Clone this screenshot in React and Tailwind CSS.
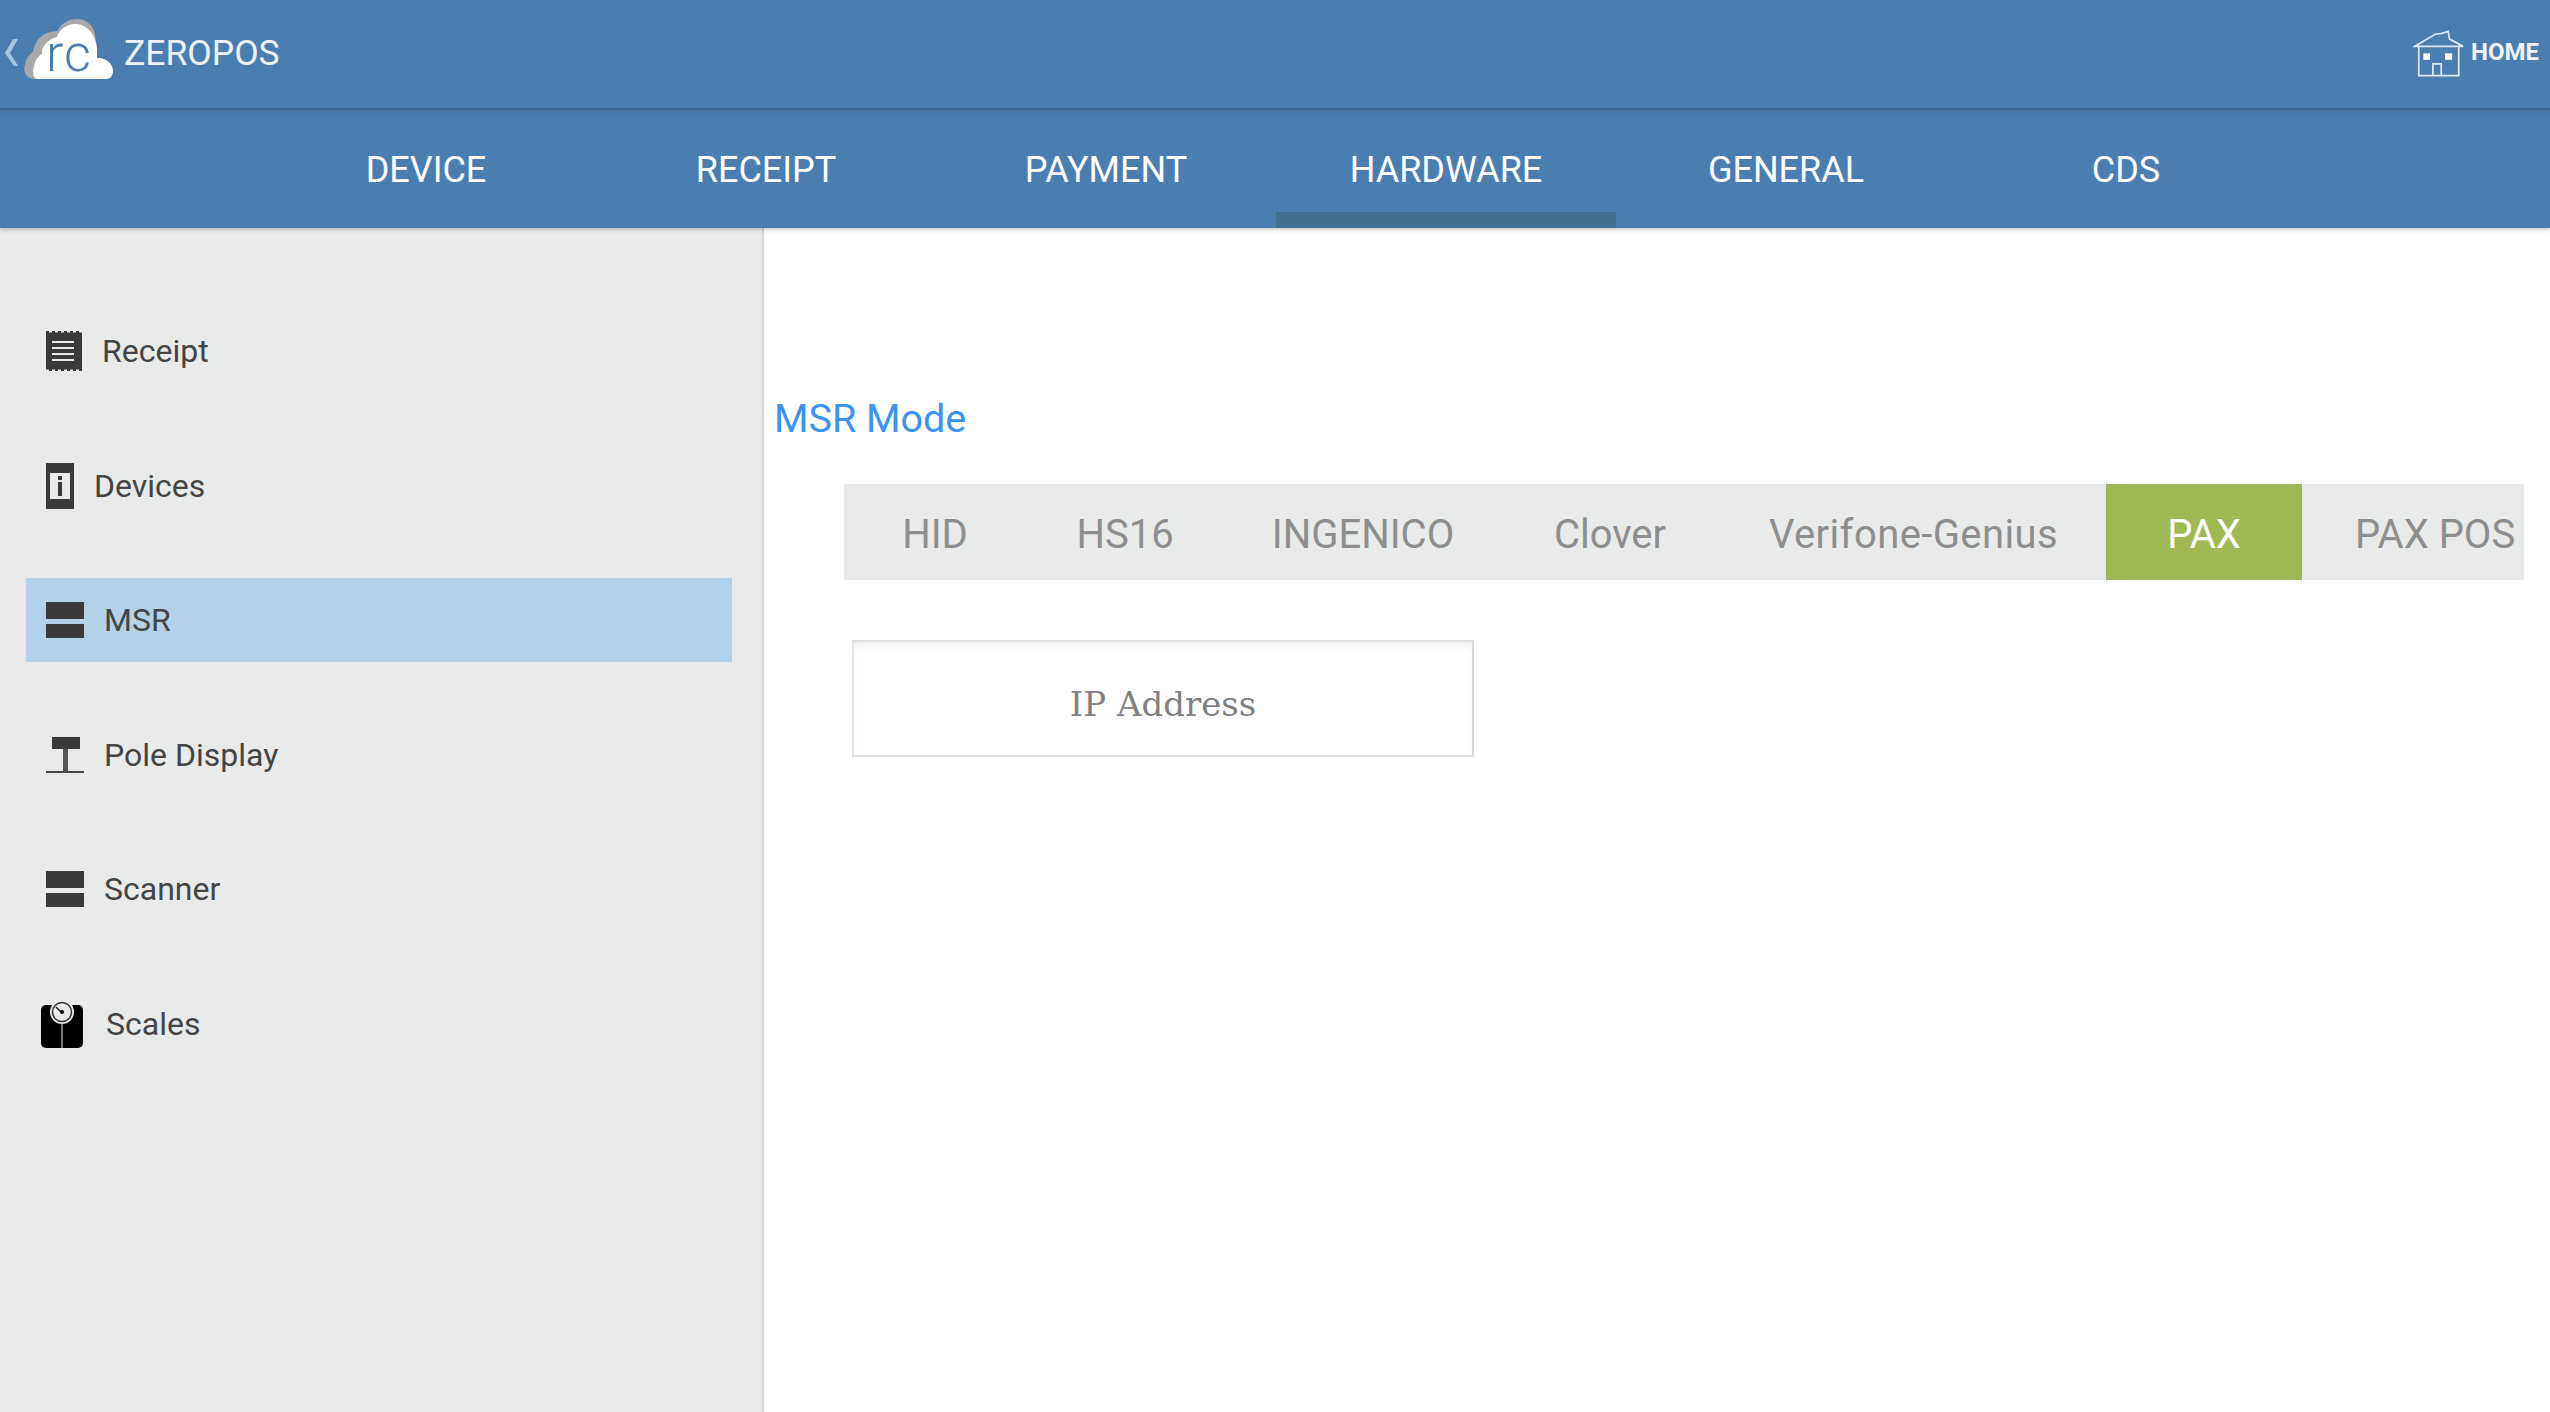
const tabs = ['DEVICE', 'RECEIPT', 'PAYMENT', 'HARDWARE', 'GENERAL', 'CDS']

function ReceiptIcon() {
  return (
    <svg viewBox="0 0 36 40" className="w-[36px] h-[40px]">
      <path
        d="M0 0h3v1.5h3V0h3v1.5h3V0h3v1.5h3V0h3v1.5h3V0h3v1.5h3V0h3v1.5h3V0v40h-3v-1.5h-3V40h-3v-1.5h-3V40h-3v-1.5h-3V40h-3v-1.5h-3V40h-3v-1.5h-3V40h-3v-1.5h-3V40z"
        fill="#3a3a3a"
      />
      <path d="M6 11h22M6 17h22M6 23h22M6 29h22" stroke="#e9ebea" strokeWidth="2" />
    </svg>
  )
}

function DevicesIcon() {
  return (
    <svg viewBox="0 0 28 46" className="w-[28px] h-[46px]">
      <rect width="28" height="46" fill="#3a3a3a" />
      <rect x="4" y="10" width="20" height="26" fill="#e9ebea" />
      <rect x="12" y="13" width="4" height="4" fill="#3a3a3a" />
      <rect x="12" y="19" width="4" height="14" fill="#3a3a3a" />
    </svg>
  )
}

function BarsIcon() {
  return (
    <svg viewBox="0 0 38 36" className="w-[38px] h-[36px]">
      <rect width="38" height="17" fill="#3a3a3a" />
      <rect y="22" width="38" height="14" fill="#3a3a3a" />
    </svg>
  )
}

function PoleIcon() {
  return (
    <svg viewBox="0 0 38 36" className="w-[38px] h-[36px]">
      <rect x="6" width="28" height="12" fill="#3a3a3a" />
      <rect x="17" y="12" width="5" height="22" fill="#555" />
      <rect y="34" width="38" height="2" fill="#444" />
    </svg>
  )
}

function ScalesIcon() {
  return (
    <svg viewBox="0 0 44 48" className="w-[44px] h-[48px]">
      <path
        d="M6 5h32a5 5 0 0 1 5 5v33a5 5 0 0 1-5 5H6a5 5 0 0 1-5-5V10a5 5 0 0 1 5-5z"
        fill="#000"
      />
      <circle cx="22" cy="12" r="12" fill="#e9ebea" />
      <circle cx="22" cy="12" r="9.5" fill="none" stroke="#333" strokeWidth="1.5" />
      <path d="M16 7l6 6" stroke="#222" strokeWidth="1.5" />
      <circle cx="22" cy="12" r="2" fill="#000" />
      <rect x="21" y="24" width="2" height="24" fill="#777" />
    </svg>
  )
}

const sideItems = [
  { label: 'Receipt', icon: <ReceiptIcon />, pad: 'pl-[20px]', gap: 'ml-[20px]' },
  { label: 'Devices', icon: <DevicesIcon />, pad: 'pl-[20px]', gap: 'ml-[20px]' },
  { label: 'MSR', icon: <BarsIcon />, pad: 'pl-[20px]', gap: 'ml-[20px]', active: true },
  { label: 'Pole Display', icon: <PoleIcon />, pad: 'pl-[20px]', gap: 'ml-[20px]' },
  { label: 'Scanner', icon: <BarsIcon />, pad: 'pl-[20px]', gap: 'ml-[20px]' },
  { label: 'Scales', icon: <ScalesIcon />, pad: 'pl-[14px]', gap: 'ml-[22px]' },
]

const modes = [
  { label: 'HID', box: 'w-[182px] justify-center' },
  { label: 'HS16', box: 'w-[198px] justify-center' },
  { label: 'INGENICO', box: 'w-[278px] justify-center' },
  { label: 'Clover', box: 'w-[216px] justify-center' },
  { label: 'Verifone-Genius', box: 'w-[388px] justify-center pl-[3px] tracking-[0.4px]' },
  { label: 'PAX', box: 'w-[196px] justify-center', active: true },
  { label: 'PAX POS', box: 'w-[222px] justify-start pl-[53px] whitespace-nowrap' },
]

export default function App() {
  return (
    <div className="w-[2550px] h-[1412px] flex flex-col overflow-hidden bg-white font-['Roboto',sans-serif]">
      <div className="h-[110px] shrink-0 flex items-center justify-between bg-[#4a7eb1] border-b-2 border-[#3d6a92]">
        <div className="flex items-center pl-[4px] pb-[2px]">
          <svg viewBox="0 0 14 28" className="w-[14px] h-[28px]">
            <path d="M9 0h5L6 14l8 13h-4L1 14z" fill="#a6c6e0" />
          </svg>
          <div className="relative w-[90px] h-[60px] ml-[6px] mb-[8px]">
            <svg viewBox="0 0 90 60" className="w-[90px] h-[60px]">
              <path
                d="M10 60C2 60-1 52 1 46c1-6 4-11 8-13 1-6 4-13 10-17 5-3 11-4 15-4C36 5 44 0 53 0c9 0 16 6 18 15l2 15-13 30z"
                fill="#a9a9a9"
              />
              <path
                d="M14 60C8 60 9 50 10 47c1-6 5-11 8-12-1-7 6-15 15-17 2-8 11-14 20-13 10 1 19 10 20 25v9c9-1 16 6 16 13 0 5-3 8-7 8z"
                fill="#fff"
              />
            </svg>
            <span className="absolute left-[22px] top-[9px] text-[52px] leading-none font-light tracking-[1px] text-[#4a7eb1]">rc</span>
          </div>
          <span className="ml-[10px] mt-[2px] text-[35.5px] leading-none text-[#eef3f8]">ZEROPOS</span>
        </div>
        <div className="flex items-center pr-[11px]">
          <svg viewBox="0 0 54 48" className="w-[52px] h-[48px]" fill="none" stroke="#dfe9f2" strokeWidth="1.8">
            <path d="M2 16L23 3.5l7-1 6.5-2 1.5 8 14 7.5z" />
            <path d="M6 16v30.5h41.5V16" />
            <path d="M20.7 46.5V34.3h8.6v12.2" />
            <rect x="10.7" y="23.3" width="7" height="6.7" fill="#fff" stroke="none" />
            <rect x="33.3" y="23.3" width="7.4" height="6.7" fill="#fff" stroke="none" />
          </svg>
          <span className="ml-[6px] text-[24px] leading-none font-bold text-[#eef3f8] mb-[4px]">HOME</span>
        </div>
      </div>

      <div className="h-[118px] shrink-0 flex pl-[256px] bg-[#4a7eb1] shadow-[inset_0_6px_6px_-6px_rgba(0,0,0,0.2),0_2px_4px_rgba(0,0,0,0.2)] relative z-10">
        {tabs.map((t) => (
          <div
            key={t}
            className={`w-[340px] flex items-center justify-center pt-[18px] text-[36px] text-white border-b-[16px] ${
              t === 'HARDWARE' ? 'border-[#416f8f]' : 'border-transparent'
            }`}
          >
            {t}
          </div>
        ))}
      </div>

      <div className="flex-1 flex">
        <div className="w-[764px] shrink-0 bg-[#e9ebea] border-r-2 border-[#d6d8d7] pt-[81px] pl-[26px] pr-[30px] flex flex-col gap-[50.5px]">
          {sideItems.map((item) => (
            <div
              key={item.label}
              className={`h-[84px] flex items-center ${item.pad} ${item.active ? 'bg-[#b2d2ea]' : ''}`}
            >
              {item.icon}
              <span className={`${item.gap} text-[32px] text-[#444]`}>{item.label}</span>
            </div>
          ))}
        </div>

        <div className="flex-1 pl-[10px]">
          <h2 className="mt-[161px] text-[39.5px] leading-[60px] font-normal text-[#3a93ef]">MSR Mode</h2>
          <div className="ml-[70px] mt-[35px] w-[1680px] h-[96px] flex bg-[#e9ebea]">
            {modes.map((m) => (
              <div
                key={m.label}
                className={`${m.box} flex items-center pt-[6px] text-[40px] ${
                  m.active ? 'bg-[#a0b853] text-white' : 'text-[#8e8e8e]'
                }`}
              >
                {m.label}
              </div>
            ))}
          </div>
          <div className="ml-[78px] mt-[60px] w-[622px] h-[117px] flex items-center justify-center pt-[12px] border-2 border-[#e4e4e4] border-r-[#d6d6d6] border-t-[#dedede] shadow-[inset_0_6px_8px_-4px_rgba(0,0,0,0.1)] font-['DejaVu_Serif',serif] text-[34px] text-[#808080]">
            IP Address
          </div>
        </div>
      </div>
    </div>
  )
}
